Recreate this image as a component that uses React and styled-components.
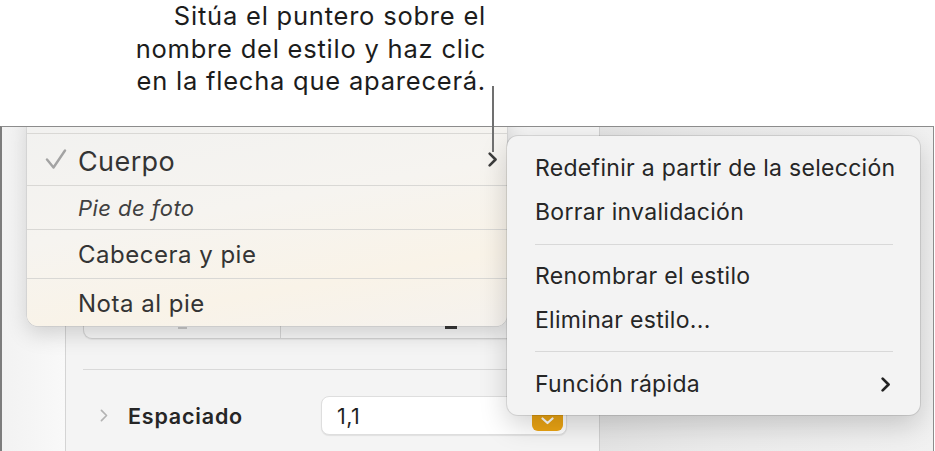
import React from 'react'
import styled, { createGlobalStyle } from 'styled-components'

const GlobalStyle = createGlobalStyle`
  html, body {
    margin: 0;
    padding: 0;
    background: #ffffff;
  }
  body {
    font-family: Inter, "Noto Sans", "Liberation Sans", sans-serif;
    color: #1d1d1f;
  }
`

const Page = styled.div`
  width: 935px;
  height: 451px;
  display: flex;
  flex-direction: column;
  overflow: hidden;
  position: relative;
`

const Callout = styled.div`
  height: 126px;
  box-sizing: border-box;
  padding: 0 449px 0 0;
  text-align: right;
  font-size: 25.5px;
  letter-spacing: 0.78px;
  line-height: 32.5px;
  white-space: nowrap;
  color: #1c1c1c;
`

const Pointer = styled.div`
  position: absolute;
  left: 492px;
  top: 86px;
  width: 2px;
  height: 66px;
  background: #707070;
  z-index: 5;
`

const Frame = styled.div`
  flex: 1;
  position: relative;
  overflow: hidden;
  border-top: 1px solid #8c8c8c;
  border-left: 2px solid #7d7d7d;
  border-right: 1px solid #8c8c8c;
  margin-right: 1px;
`

const Window = styled.div`
  display: flex;
  height: 100%;
`

const Strip = styled.div`
  width: 63px;
  background: linear-gradient(90deg, #f2f2f2 0%, #f9f9f9 100%);
`

const Panel = styled.div`
  width: 535px;
  box-sizing: border-box;
  border-left: 1px solid #d4d4d4;
  border-right: 1px solid #d0d0d0;
  background: #f4f4f4;
  display: flex;
  flex-direction: column;
  padding: 0 17px;
`

const Side = styled.div`
  flex: 1;
  background: linear-gradient(90deg, #e4e4e4 0%, #ebebeb 35%, #f1f1f1 100%);
`

const Segmented = styled.div`
  margin-top: 73px;
  height: 139px;
  box-sizing: border-box;
  border: 1px solid #d3d3d3;
  border-top: none;
  border-radius: 0 0 9px 9px;
  background: #f7f7f7;
  box-shadow: 0 1px 1px rgba(0, 0, 0, 0.06);
  display: flex;
`

const Segment = styled.div`
  width: ${(p) => p.$width}px;
  flex: ${(p) => (p.$width ? 'none' : 1)};
  border-left: ${(p) => (p.$first ? 'none' : '1px solid #d6d6d6')};
  display: flex;
  align-items: flex-end;
  justify-content: ${(p) => (p.$pad ? 'flex-start' : 'center')};
  padding: 0 0 9px ${(p) => p.$pad || 0}px;
  box-sizing: border-box;
`

const Mark = styled.span`
  width: ${(p) => (p.$dark ? 12 : 9)}px;
  height: ${(p) => (p.$dark ? 3 : 2)}px;
  background: ${(p) => (p.$dark ? '#3a3a3a' : '#c8c8c8')};
`

const Divider = styled.div`
  margin-top: 30px;
  height: 1px;
  background: #d9d9d9;
`

const PropRow = styled.div`
  margin-top: 26px;
  height: 39px;
  display: flex;
  align-items: center;
`

const Disclosure = styled.span`
  width: 28px;
  padding-left: 17px;
  display: flex;
  align-items: center;
`

const Label = styled.span`
  width: 193px;
  font-size: 21.5px;
  letter-spacing: 0.8px;
  font-weight: 600;
  color: #262626;
`

const Field = styled.div`
  width: 246px;
  height: 39px;
  box-sizing: border-box;
  border: 1px solid #dedede;
  border-radius: 8px;
  background: #ffffff;
  box-shadow: 0 1px 1px rgba(0, 0, 0, 0.08);
  display: flex;
  align-items: center;
  justify-content: space-between;
  padding: 0 3px 0 15px;
  font-size: 21.5px;
  letter-spacing: 0.4px;
  color: #1f1f1f;
`

const Stepper = styled.span`
  width: 31px;
  height: 31px;
  border-radius: 6px;
  background: #eba413;
  display: flex;
  align-items: flex-end;
  justify-content: center;
  padding-bottom: 6px;
  box-sizing: border-box;
`

const StyleMenu = styled.div`
  position: absolute;
  left: 25px;
  top: -20px;
  width: 480px;
  padding-top: 26px;
  border-radius: 11px;
  background: linear-gradient(170deg, #f1f1f0 0%, #f6f4f0 45%, #f9f3e8 75%, #f5f2ee 100%);
  box-shadow: 0 8px 22px rgba(0, 0, 0, 0.16), 0 0 0 0.5px rgba(0, 0, 0, 0.12);
  overflow: hidden;
  z-index: 2;
`

const StyleRow = styled.div`
  height: ${(p) => p.$h}px;
  border-top: 1px solid #d9d8d5;
  display: flex;
  align-items: center;
`

const Check = styled.span`
  width: 51px;
  box-sizing: border-box;
  padding-left: 18px;
  display: flex;
`

const StyleName = styled.span`
  flex: 1;
  padding-left: ${(p) => (p.$check ? 0 : 51)}px;
  padding-top: ${(p) => (p.$check ? 3 : 1)}px;
  font-size: ${(p) => p.$size}px;
  letter-spacing: ${(p) => p.$track}px;
  font-style: ${(p) => (p.$italic ? 'italic' : 'normal')};
  color: ${(p) => (p.$italic ? '#404040' : '#343434')};
`

const RowArrow = styled.span`
  padding-right: 9px;
  display: flex;
`

const Submenu = styled.div`
  position: absolute;
  left: 505px;
  top: 9px;
  width: 413px;
  box-sizing: border-box;
  padding: 10px 0 9px;
  border-radius: 11px;
  background: #f3f3f3;
  box-shadow: 0 10px 28px rgba(0, 0, 0, 0.18), 0 0 0 1px rgba(0, 0, 0, 0.1);
  z-index: 3;
`

const Item = styled.div`
  height: 44px;
  padding: 0 29px 0 28px;
  display: flex;
  align-items: center;
  justify-content: space-between;
  white-space: nowrap;
  font-size: 23px;
  letter-spacing: 0.3px;
  color: #262626;
`

const Separator = styled.div`
  height: 1px;
  margin: ${(p) => (p.$top ? '9px 27px 10px 28px' : '10px 27px 9px 28px')};
  background: #d8d8d8;
`

const Chevron = ({ color = '#333', size = 14, width = 2.2 }) => (
  <svg width={size * 0.65} height={size} viewBox="0 0 9 14" fill="none">
    <path d="M1.5 1.5 L7 7 L1.5 12.5" stroke={color} strokeWidth={width} strokeLinecap="round" strokeLinejoin="round" />
  </svg>
)

const CheckIcon = () => (
  <svg width="22" height="22" viewBox="0 0 22 22" fill="none">
    <path d="M2 10.5 L8.5 18.5 L20 1.5" stroke="#a3a3a3" strokeWidth="2.4" strokeLinecap="round" strokeLinejoin="round" />
  </svg>
)

const styles = [
  { name: 'Cuerpo', h: 51, size: 27, track: 0.4, check: true, arrow: true },
  { name: 'Pie de foto', h: 43, size: 22, track: 0.45, italic: true },
  { name: 'Cabecera y pie', h: 48, size: 24, track: 0.5 },
  { name: 'Nota al pie', h: 47, size: 24, track: 0.5 },
]

export default function App() {
  return (
    <>
      <GlobalStyle />
      <Page>
        <Callout>
          Sitúa el puntero sobre el
          <br />
          nombre del estilo y haz clic
          <br />
          en la flecha que aparecerá.
        </Callout>
        <Pointer />
        <Frame>
          <Window>
            <Strip />
            <Panel>
              <Segmented>
                <Segment $first $width={196}>
                  <Mark />
                </Segment>
                <Segment $pad={164}>
                  <Mark $dark />
                </Segment>
              </Segmented>
              <Divider />
              <PropRow>
                <Disclosure>
                  <Chevron color="#b3b3b3" size={13} width={1.8} />
                </Disclosure>
                <Label>Espaciado</Label>
                <Field>
                  <span>1,1</span>
                  <Stepper>
                    <svg width="13" height="8" viewBox="0 0 13 8" fill="none">
                      <path d="M1.5 1.5 L6.5 6 L11.5 1.5" stroke="#fff" strokeWidth="2.2" strokeLinecap="round" strokeLinejoin="round" />
                    </svg>
                  </Stepper>
                </Field>
              </PropRow>
            </Panel>
            <Side />
          </Window>

          <StyleMenu>
            {styles.map((s) => (
              <StyleRow key={s.name} $h={s.h}>
                {s.check && (
                  <Check>
                    <CheckIcon />
                  </Check>
                )}
                <StyleName $check={s.check} $size={s.size} $track={s.track} $italic={s.italic}>
                  {s.name}
                </StyleName>
                {s.arrow && (
                  <RowArrow>
                    <Chevron color="#3d3d3d" size={15} width={2.4} />
                  </RowArrow>
                )}
              </StyleRow>
            ))}
          </StyleMenu>

          <Submenu>
            <Item>Redefinir a partir de la selección</Item>
            <Item>Borrar invalidación</Item>
            <Separator />
            <Item>Renombrar el estilo</Item>
            <Item>Eliminar estilo...</Item>
            <Separator $top />
            <Item>
              Función rápida
              <Chevron color="#222" size={15} width={2.5} />
            </Item>
          </Submenu>
        </Frame>
      </Page>
    </>
  )
}
